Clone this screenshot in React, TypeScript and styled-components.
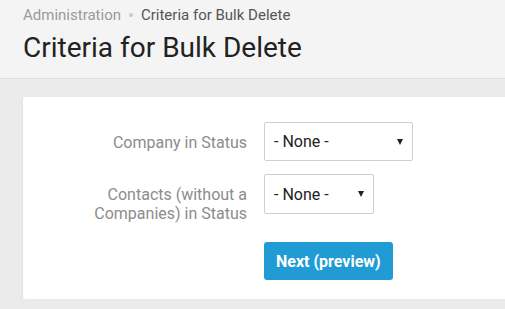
import styled, { createGlobalStyle } from "styled-components";

const GlobalStyle = createGlobalStyle`
  html, body {
    margin: 0;
    padding: 0;
    background: #ebebeb;
    font-family: Roboto, "Liberation Sans", sans-serif;
    overflow: hidden;
  }
`;

const PageHeader = styled.header`
  background: #f4f4f4;
  border-bottom: 1px solid #dedede;
  padding: 5px 23px 13px;
`;

const Crumbs = styled.div`
  display: flex;
  align-items: center;
  gap: 8px;
  font-size: 15px;
  line-height: 20px;
  color: #555;

  a {
    color: #9a9a9a;
    text-decoration: none;
  }
`;

const Dot = styled.span`
  width: 4px;
  height: 4px;
  border-radius: 50%;
  background: #c8c8c8;
`;

const Title = styled.h1`
  margin: 6px 0 0;
  font-size: 28px;
  line-height: 34px;
  font-weight: 400;
  color: #222;
`;

const Content = styled.main`
  padding: 18px 0 0 23px;
`;

const Card = styled.section`
  background: #fff;
  margin-right: -12px;
  border-radius: 2px;
  box-shadow: 0 1px 3px rgba(0, 0, 0, 0.08);
  padding: 25px 0 19px;
  display: grid;
  grid-template-columns: 224px 1fr;
  align-items: start;
  column-gap: 17px;
  row-gap: 13px;
`;

const Label = styled.label`
  text-align: right;
  font-size: 16px;
  line-height: 19px;
  color: #8c8c8c;
  padding-top: 11px;
`;

const SelectWrap = styled.div<{ $width: number }>`
  position: relative;
  width: ${(p) => p.$width}px;
`;

const Select = styled.select<{ $height: number }>`
  display: block;
  appearance: none;
  width: 100%;
  height: ${(p) => p.$height}px;
  box-sizing: border-box;
  border: 1px solid #cfcfcf;
  border-radius: 2px;
  background: #fff;
  padding: 0 24px 0 9px;
  font-family: Roboto, "Liberation Sans", sans-serif;
  font-size: 16px;
  color: #222;
`;

const Caret = styled.span`
  position: absolute;
  right: 10px;
  top: 50%;
  margin-top: -3px;
  width: 0;
  height: 0;
  border-left: 3.5px solid transparent;
  border-right: 3.5px solid transparent;
  border-top: 6px solid #222;
  pointer-events: none;
`;

const Actions = styled.div`
  grid-column: 2;
  padding-top: 6px;
`;

const Button = styled.button`
  display: block;
  height: 38px;
  padding: 0 12px;
  border: 0;
  border-radius: 3px;
  background: #219bd4;
  color: #fff;
  font-family: Roboto, "Liberation Sans", sans-serif;
  font-size: 16px;
  font-weight: 700;
  cursor: pointer;
`;

const StatusSelect = ({ width, height }: { width: number; height: number }) => (
  <SelectWrap $width={width}>
    <Select $height={height} defaultValue="">
      <option value="">- None -</option>
    </Select>
    <Caret />
  </SelectWrap>
);

export default function App() {
  return (
    <>
      <GlobalStyle />
      <PageHeader>
        <Crumbs>
          <a href="#">Administration</a>
          <Dot />
          <span>Criteria for Bulk Delete</span>
        </Crumbs>
        <Title>Criteria for Bulk Delete</Title>
      </PageHeader>
      <Content>
        <Card>
          <Label>Company in Status</Label>
          <StatusSelect width={149} height={39} />
          <Label>
            Contacts (without a
            <br />
            Companies) in Status
          </Label>
          <StatusSelect width={110} height={40} />
          <Actions>
            <Button type="button">Next (preview)</Button>
          </Actions>
        </Card>
      </Content>
    </>
  );
}
